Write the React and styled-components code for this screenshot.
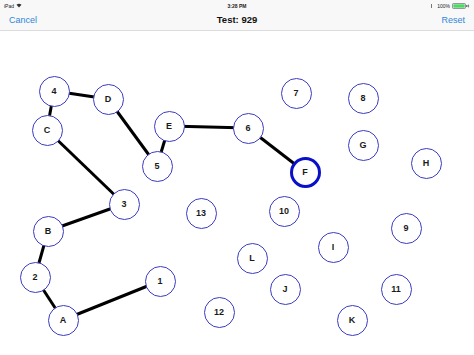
import React from "react";
import styled, { createGlobalStyle } from "styled-components";

const GlobalStyle = createGlobalStyle`
  html, body {
    margin: 0;
    padding: 0;
    background: #fff;
    font-family: "Liberation Sans", Arial, sans-serif;
  }
`;

const HEADER_H = 31;

const nodes = [
  { id: "4", x: 54, y: 91 },
  { id: "D", x: 108, y: 99 },
  { id: "C", x: 47, y: 130 },
  { id: "5", x: 157, y: 166 },
  { id: "E", x: 169, y: 126 },
  { id: "6", x: 248, y: 128 },
  { id: "7", x: 296, y: 93 },
  { id: "F", x: 305, y: 172, active: true },
  { id: "8", x: 363, y: 98 },
  { id: "G", x: 363, y: 145 },
  { id: "H", x: 426, y: 163 },
  { id: "3", x: 124, y: 204 },
  { id: "13", x: 201, y: 213 },
  { id: "B", x: 48, y: 231 },
  { id: "2", x: 35, y: 277 },
  { id: "1", x: 160, y: 281 },
  { id: "A", x: 63, y: 320 },
  { id: "12", x: 219, y: 312 },
  { id: "10", x: 284, y: 211 },
  { id: "9", x: 406, y: 228 },
  { id: "I", x: 333, y: 247 },
  { id: "L", x: 252, y: 258 },
  { id: "J", x: 285, y: 289 },
  { id: "11", x: 396, y: 289 },
  { id: "K", x: 352, y: 320 },
];

const edges = [
  ["4", "D"],
  ["4", "C"],
  ["C", "3"],
  ["D", "5"],
  ["5", "E"],
  ["E", "6"],
  ["6", "F"],
  ["3", "B"],
  ["B", "2"],
  ["2", "A"],
  ["A", "1"],
];

const Page = styled.div`
  width: 474px;
  height: 355px;
  display: flex;
  flex-direction: column;
  overflow: hidden;
`;

const Header = styled.div`
  height: ${HEADER_H - 1}px;
  background: #f8f8f8;
  border-bottom: 1px solid #dcdcdc;
  display: flex;
  flex-direction: column;
`;

const StatusBar = styled.div`
  height: 11px;
  padding: 0 4px;
  display: flex;
  align-items: center;
  justify-content: space-between;
  font-size: 5px;
  color: #222;
`;

const StatusSide = styled.div`
  flex: 1;
  display: flex;
  align-items: center;
  gap: 2px;
  justify-content: ${(p) => (p.right ? "flex-end" : "flex-start")};
`;

const Clock = styled.div`
  font-weight: bold;
`;

const Tick = styled.span`
  width: 1px;
  height: 4px;
  background: #777;
  margin-right: 3px;
`;

const NavBar = styled.div`
  flex: 1;
  display: flex;
  align-items: center;
  justify-content: space-between;
  padding: 0 9px 2px 9px;
`;

const NavButton = styled.div`
  flex: 1;
  font-size: 9px;
  color: #2f86d9;
  text-align: ${(p) => (p.right ? "right" : "left")};
`;

const Title = styled.div`
  font-size: 9.5px;
  font-weight: bold;
  color: #111;
`;

const Canvas = styled.div`
  position: relative;
  flex: 1;
`;

const Lines = styled.svg`
  position: absolute;
  inset: 0;
`;

const Node = styled.div`
  position: absolute;
  width: 31px;
  height: 31px;
  margin: -15.5px 0 0 -15.5px;
  box-sizing: border-box;
  border-radius: 50%;
  border: ${(p) => (p.active ? "3px solid #0a10c8" : "1.6px solid #3c3cc2")};
  background: #fff;
  display: flex;
  align-items: center;
  justify-content: center;
  font-size: 9px;
  font-weight: bold;
  color: #1a1a1a;
`;

const Battery = () => (
  <svg width="18" height="6" viewBox="0 0 18 6">
    <rect x="0.5" y="0.5" width="13" height="5" rx="1" fill="none" stroke="#555" strokeWidth="0.6" />
    <rect x="1.3" y="1.3" width="11.4" height="3.4" fill="#4cd964" />
    <rect x="14.2" y="2" width="1.2" height="2" fill="#555" />
    <path d="M16.5 1.5 L16.5 4.5 M15.8 3 L17.2 3" stroke="#555" strokeWidth="0.6" />
  </svg>
);

const Wifi = () => (
  <svg width="6" height="5" viewBox="0 0 12 10">
    <path d="M6 9 L1 3.5 A7.5 7.5 0 0 1 11 3.5 Z" fill="#333" />
  </svg>
);

const byId = Object.fromEntries(nodes.map((n) => [n.id, n]));

export default function App() {
  return (
    <Page>
      <GlobalStyle />
      <Header>
        <StatusBar>
          <StatusSide>
            <span>iPad</span>
            <Wifi />
          </StatusSide>
          <Clock>3:28 PM</Clock>
          <StatusSide right>
            <Tick />
            <span>100%</span>
            <Battery />
          </StatusSide>
        </StatusBar>
        <NavBar>
          <NavButton>Cancel</NavButton>
          <Title>Test: 929</Title>
          <NavButton right>Reset</NavButton>
        </NavBar>
      </Header>
      <Canvas>
        <Lines width="474" height={355 - HEADER_H}>
          {edges.map(([a, b]) => (
            <line
              key={a + b}
              x1={byId[a].x}
              y1={byId[a].y - HEADER_H}
              x2={byId[b].x}
              y2={byId[b].y - HEADER_H}
              stroke="#000"
              strokeWidth="3"
            />
          ))}
        </Lines>
        {nodes.map((n) => (
          <Node
            key={n.id}
            active={n.active}
            style={{ left: n.x, top: n.y - HEADER_H }}
          >
            {n.id}
          </Node>
        ))}
      </Canvas>
    </Page>
  );
}
